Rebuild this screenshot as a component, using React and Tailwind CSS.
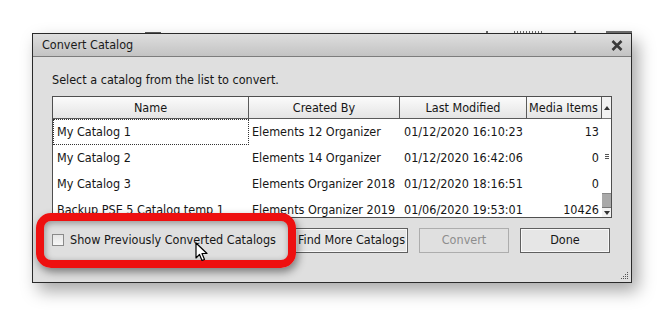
import { useState } from "react";

const catalogs = [
  { name: "My Catalog 1", createdBy: "Elements 12 Organizer", modified: "01/12/2020 16:10:23", items: 13 },
  { name: "My Catalog 2", createdBy: "Elements 14 Organizer", modified: "01/12/2020 16:42:06", items: 0 },
  { name: "My Catalog 3", createdBy: "Elements Organizer 2018", modified: "01/12/2020 18:16:51", items: 0 },
  { name: "Backup PSE 5 Catalog temp 1", createdBy: "Elements Organizer 2019", modified: "01/06/2020 19:53:01", items: 10426 },
];

const font = { fontFamily: '"DejaVu Sans Condensed", "Liberation Sans", Arial, sans-serif' };

const Cursor = () => (
  <svg width="14" height="21" viewBox="0 0 14 21" className="absolute left-[195px] top-[242px]">
    <path
      d="M1 1 L1 16 L4.5 12.5 L7 18.5 L9.5 17.5 L7 11.5 L12 11.5 Z"
      fill="#fff"
      stroke="#000"
      strokeWidth="1.2"
      strokeLinejoin="round"
    />
  </svg>
);

const App = () => {
  const [showConverted, setShowConverted] = useState(false);

  return (
    <div className="relative h-[315px] w-[664px] overflow-hidden bg-white text-[12.5px] text-[#161616]" style={font}>
      {/* window behind, peeking over the top */}
      <div className="absolute left-[145px] top-[32px] h-[1px] w-[16px] bg-[#555]"></div>
      <div className="absolute left-[486px] top-[31px] h-[2px] w-[2px] bg-[#666]"></div>
      <div className="absolute left-[514px] top-[31px] h-[2px] w-[28px] bg-[repeating-linear-gradient(90deg,#666_0_1px,transparent_1px_3px)]"></div>
      <div className="absolute left-[574px] top-[31px] h-[2px] w-[2px] bg-[#666]"></div>
      <div className="absolute left-[606px] top-[31px] h-[2px] w-[26px] bg-[#6a6a6a]"></div>

      <div className="ml-[32px] mt-[33px] flex h-[250px] w-[600px] flex-col border border-[#2a2a2a] bg-[#dfdfdf] shadow-[6px_8px_16px_rgba(0,0,0,0.35)]">
        <div className="flex h-[23px] items-center justify-between border-b border-[#7c7c7c] bg-gradient-to-b from-[#dedede] to-[#c3c3c3] pl-[9px] pr-[8px]">
          <span className="text-[12.5px] text-[#1a1a1a]">Convert Catalog</span>
          <svg width="12" height="11" viewBox="0 0 12 11">
            <path d="M1.5 1 L10.5 10 M10.5 1 L1.5 10" stroke="#3a3a3a" strokeWidth="2.6" />
          </svg>
        </div>

        <div className="relative flex flex-1 flex-col pl-[19px]">
          <p className="mt-[15px] h-[16px] leading-[16px]">Select a catalog from the list to convert.</p>

          <div className="mt-[8px] flex h-[122px] w-[560px] border border-[#4f4f4f] bg-white">
            <div className="flex w-[549px] flex-col">
              <div className="flex h-[22px] border-b border-[#5a5a5a] bg-gradient-to-b from-[#fbfbfb] to-[#e4e4e4] text-center leading-[21px]">
                <div className="w-[196px] border-r border-[#5a5a5a]">Name</div>
                <div className="w-[151px] border-r border-[#5a5a5a]">Created By</div>
                <div className="w-[127px] border-r border-[#5a5a5a]">Last Modified</div>
                <div className="w-[75px] overflow-hidden whitespace-nowrap border-r border-[#5a5a5a] pl-[2px] text-left">Media Items</div>
              </div>
              <div className="h-[98px] overflow-hidden">
                {catalogs.map((catalog, index) => (
                  <div key={catalog.name} className="flex h-[26px] items-center">
                    <div
                      className={
                        index === 0
                          ? "flex h-[26px] w-[196px] items-center border border-dotted border-[#333] pl-[3px] whitespace-nowrap"
                          : "w-[196px] pl-[4px] whitespace-nowrap"
                      }
                    >
                      {catalog.name}
                    </div>
                    <div className="w-[151px] pl-[3px] whitespace-nowrap">{catalog.createdBy}</div>
                    <div className="w-[127px] pl-[4px] whitespace-nowrap">{catalog.modified}</div>
                    <div className="w-[75px] pr-[3px] text-right">{catalog.items}</div>
                  </div>
                ))}
              </div>
            </div>

            <div className="flex w-[10px] flex-col bg-[#a9a9a9]">
              <div className="flex h-[22px] items-center justify-center border-b border-[#777] bg-[#f2f2f2]">
                <svg width="6" height="4" viewBox="0 0 6 4">
                  <path d="M0 4 L3 0 L6 4 Z" fill="#333" />
                </svg>
              </div>
              <div className="flex h-[75px] items-center justify-center border-b border-[#888] bg-white">
                <div className="flex flex-col gap-[1px]">
                  <div className="h-[1px] w-[4px] bg-[#555]"></div>
                  <div className="h-[1px] w-[4px] bg-[#555]"></div>
                  <div className="h-[1px] w-[4px] bg-[#555]"></div>
                </div>
              </div>
              <div className="flex-1"></div>
              <div className="flex h-[10px] items-center justify-center border-t border-[#777] bg-[#f2f2f2]">
                <svg width="6" height="4" viewBox="0 0 6 4">
                  <path d="M0 0 L6 0 L3 4 Z" fill="#333" />
                </svg>
              </div>
            </div>
          </div>

          <div className="mt-[9px] flex h-[26px] w-[558px] items-center">
            <label className="flex items-center gap-[6px]">
              <span
                onClick={() => setShowConverted(!showConverted)}
                className="h-[12px] w-[12px] border border-[#8a8a8a] bg-gradient-to-b from-[#e6e6e6] to-[#f7f7f7]"
              ></span>
              <span>Show Previously Converted Catalogs</span>
            </label>
            <div className="flex-1"></div>
            <div className="flex gap-[11px]">
              <button className="h-[25px] w-[113px] whitespace-nowrap border border-[#5f5f5f] bg-[#e6e6e6] shadow-[inset_0_0_0_1px_#f8f8f8]">
                Find More Catalogs
              </button>
              <button className="h-[25px] w-[90px] border border-[#adadad] bg-[#e0e0e0] text-[#8d8d8d]">
                Convert
              </button>
              <button className="h-[25px] w-[90px] border border-[#5f5f5f] bg-[#e6e6e6] shadow-[inset_0_0_0_1px_#f8f8f8]">
                Done
              </button>
            </div>
          </div>

          <svg width="9" height="9" viewBox="0 0 9 9" className="absolute bottom-[2px] right-[2px]">
            <g fill="#555">
              <rect x="7" y="1" width="1" height="1" />
              <rect x="5" y="3" width="1" height="1" />
              <rect x="7" y="3" width="1" height="1" />
              <rect x="3" y="5" width="1" height="1" />
              <rect x="5" y="5" width="1" height="1" />
              <rect x="7" y="5" width="1" height="1" />
              <rect x="1" y="7" width="1" height="1" />
              <rect x="3" y="7" width="1" height="1" />
              <rect x="5" y="7" width="1" height="1" />
              <rect x="7" y="7" width="1" height="1" />
            </g>
          </svg>
        </div>
      </div>

      {/* annotation highlight */}
      <div className="absolute left-[36px] top-[213px] h-[55px] w-[260px] rounded-[15px] border-[8px] border-[#ee1010] shadow-[2px_4px_8px_rgba(0,0,0,0.45),inset_1px_2px_6px_rgba(0,0,0,0.35)]"></div>

      <Cursor />
    </div>
  );
};

export default App;
